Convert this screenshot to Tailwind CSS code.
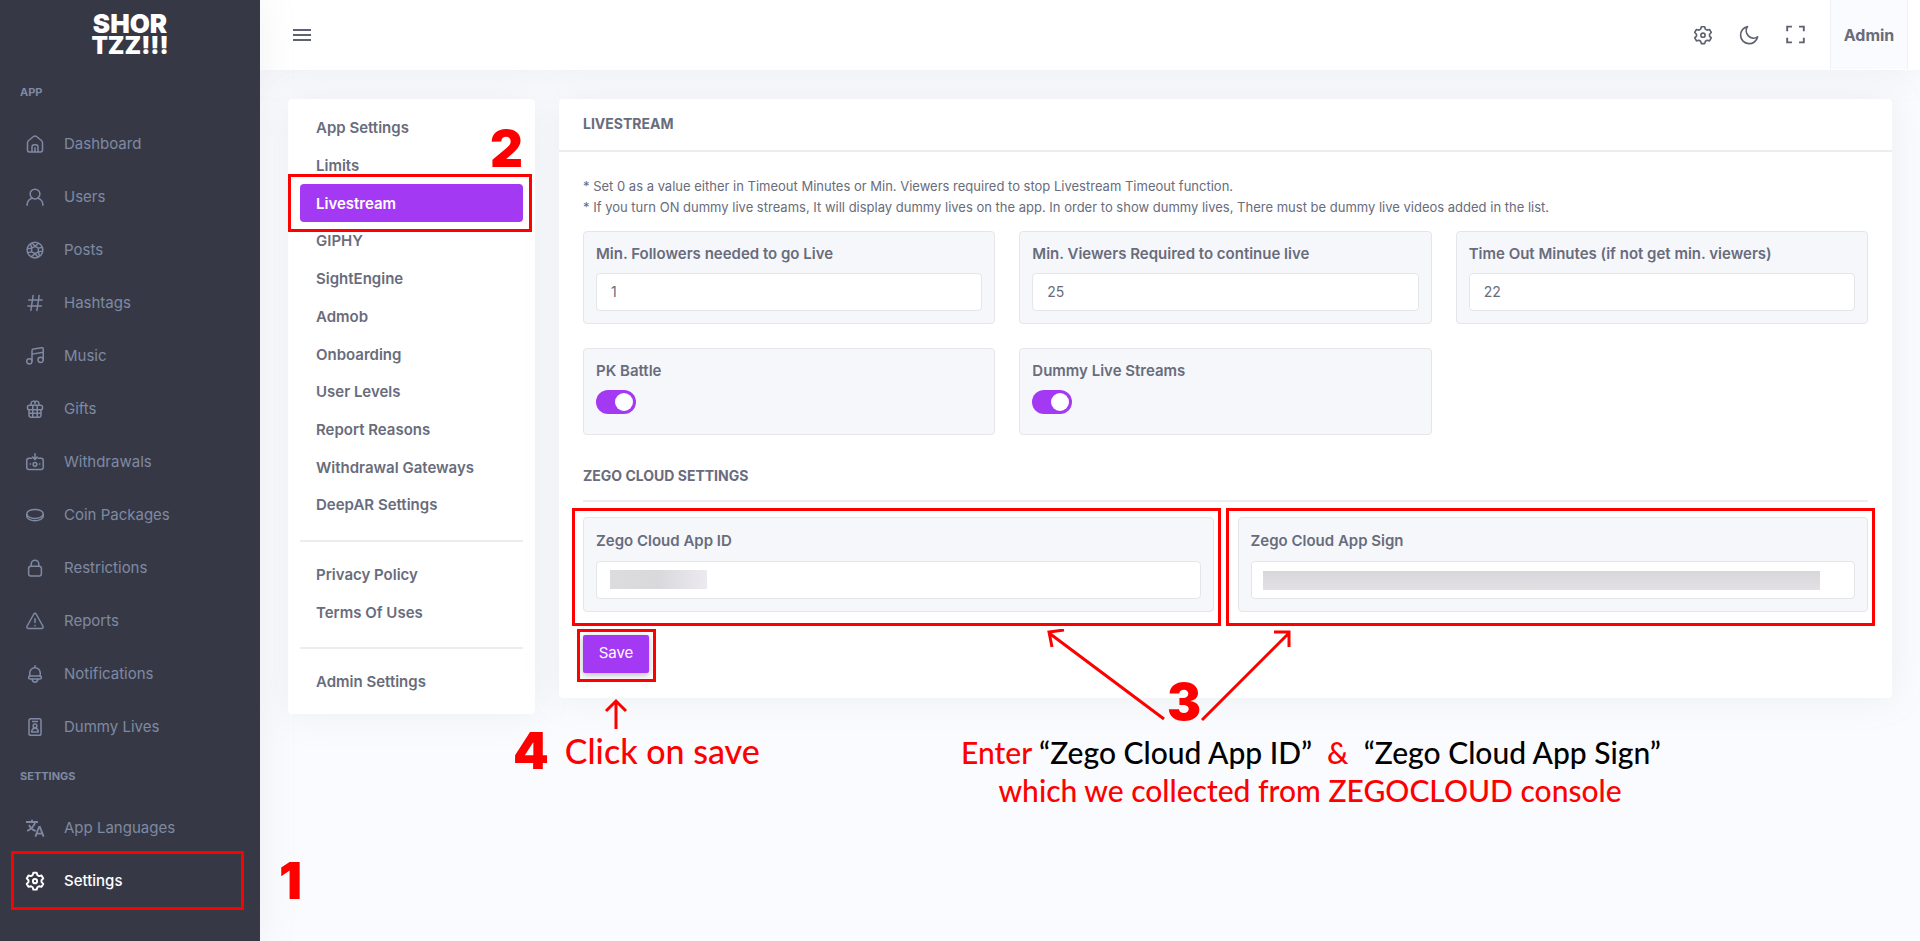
<!DOCTYPE html>
<html lang="en">
<head>
<meta charset="utf-8">
<meta name="viewport" content="width=device-width, initial-scale=1">
<title>Livestream Settings</title>
<script src="https://cdn.jsdelivr.net/npm/@tailwindcss/browser@4"></script>
</head>
<body class="min-h-screen flex bg-[#fafbfe] font-['Inter',sans-serif] text-sm text-[#686c7b]">

<aside class="relative z-10 w-[260px] shrink-0 bg-[#363945] text-[#7f89a3] shadow-[0_0_35px_rgba(154,161,171,0.15)]">
  <a href="#" class="flex h-[69px] flex-col items-center justify-center text-2xl leading-[22px] font-black text-white"><span class="text-[26px] leading-[22px]">SHOR</span><span>TZZ!!!</span></a>
  <h2 class="flex h-12 items-center px-5 text-[11px] font-bold">APP</h2>
  <nav class="text-[15px]">
    <a href="#" class="flex h-[53px] items-center gap-5 pl-[26px]"><svg class="size-[18px]" viewBox="0 0 24 24" fill="none" stroke="currentColor" stroke-width="2" stroke-linecap="round" stroke-linejoin="round"><path d="M2 10.500Q2 8.500 3.500 7.300L10 2Q12 .5 14 2l6.500 5.300Q22 8.500 22 10.500V20q0 2.500-2.500 2.500h-15Q2 22.500 2 20zM8 22v-6q0-3 3-3h2q3 0 3 3v6M12 17v5"/></svg>Dashboard</a>
    <a href="#" class="flex h-[53px] items-center gap-5 pl-[26px]"><svg class="size-[18px]" viewBox="0 0 24 24" fill="none" stroke="currentColor" stroke-width="2" stroke-linecap="round"><circle cx="12" cy="8" r="6.500"/><path d="M1.500 23c0-5 3.500-8.500 7-9.500M22.500 23c0-5-3.500-8.500-7-9.500"/></svg>Users</a>
    <a href="#" class="flex h-[53px] items-center gap-5 pl-[26px]"><svg class="size-[18px]" viewBox="0 0 24 24" fill="none" stroke="currentColor" stroke-width="2"><circle cx="12" cy="12" r="10.500"/><path d="M12 7l4.500 2.500v5L12 17l-4.500-2.500v-5zM12 7L8 2.500M12 7l5-4M16.500 9.500l5-1M16.500 14.500l5.500-1M16.500 14.500l1.500 6M12 17l4 4.500M12 17l-5 4M7.500 14.500l-5 1M7.500 9.500L2 10.500M7.500 9.500L6 3.500"/></svg>Posts</a>
    <a href="#" class="flex h-[53px] items-center gap-5 pl-[26px]"><svg class="size-[18px]" viewBox="0 0 24 24" fill="none" stroke="currentColor" stroke-width="2" stroke-linecap="round"><path d="M3.500 8h18M2.500 16h18M9.500 2l-3 20M17.500 2l-3 20"/></svg>Hashtags</a>
    <a href="#" class="flex h-[53px] items-center gap-5 pl-[26px]"><svg class="size-[18px]" viewBox="0 0 24 24" fill="none" stroke="currentColor" stroke-width="2" stroke-linejoin="round"><circle cx="4.500" cy="19" r="3.500"/><circle cx="19.500" cy="17" r="3.500"/><path d="M8 19V5q0-2 2-2.300L21 1q2-.2 2 1.500V17M8 9.500L23 7"/></svg>Music</a>
    <a href="#" class="flex h-[53px] items-center gap-5 pl-[26px]"><svg class="size-[18px]" viewBox="0 0 24 24" fill="none" stroke="currentColor" stroke-width="2" stroke-linejoin="round"><rect x="2" y="7" width="20" height="6" rx="2.500"/><path d="M4 13v7q0 3 3 3h10q3 0 3-3v-7M9 7v16M15 7v16M4 17.500h16M7 7q-1-5 2.500-5.500Q12 1 12 5q0-4 2.500-3.500Q18 2 17 7"/></svg>Gifts</a>
    <a href="#" class="flex h-[53px] items-center gap-5 pl-[26px]"><svg class="size-[18px]" viewBox="0 0 24 24" fill="none" stroke="currentColor" stroke-width="2" stroke-linecap="round" stroke-linejoin="round"><path d="M7.500 7H4Q1 7 1 10v9q0 3 3 3h16q3 0 3-3v-9q0-3-3-3h-3.500M12 1v7M9 5.500l3 3 3-3M5.500 14.500h.5M18 14.500h.5"/><circle cx="12" cy="15" r="2.500"/></svg>Withdrawals</a>
    <a href="#" class="flex h-[53px] items-center gap-5 pl-[26px]"><svg class="size-[18px]" viewBox="0 0 24 24" fill="none" stroke="currentColor" stroke-width="2"><ellipse cx="12" cy="10.500" rx="11" ry="6"/><path d="M1 10.500v3c0 3.500 5 6 11 6s11-2.500 11-6v-3"/></svg>Coin Packages</a>
    <a href="#" class="flex h-[53px] items-center gap-5 pl-[26px]"><svg class="size-[18px]" viewBox="0 0 24 24" fill="none" stroke="currentColor" stroke-width="2"><rect x="3.500" y="9.500" width="17" height="13" rx="3"/><path d="M7 9.500V6.500a5 5 0 0 1 10 0v3"/></svg>Restrictions</a>
    <a href="#" class="flex h-[53px] items-center gap-5 pl-[26px]"><svg class="size-[18px]" viewBox="0 0 24 24" fill="none" stroke="currentColor" stroke-width="2" stroke-linecap="round" stroke-linejoin="round"><path d="M10.300 3q1.700-2.600 3.400 0L22.600 19q1 3-2 3H3.400q-3 0-2-3zM12 9v5M12 18v.2"/></svg>Reports</a>
    <a href="#" class="flex h-[53px] items-center gap-5 pl-[26px]"><svg class="size-[18px]" viewBox="0 0 24 24" fill="none" stroke="currentColor" stroke-width="2" stroke-linecap="round" stroke-linejoin="round"><path d="M12 1v2.500M5 14.500v-4a7 7 0 0 1 14 0v4M6 14.500h12q2.500 0 2.500 2t-2.500 2H6q-2.500 0-2.500-2t2.500-2zM8 19q1 4 4 4t4-4"/></svg>Notifications</a>
    <a href="#" class="flex h-[53px] items-center gap-5 pl-[26px]"><svg class="size-[18px]" viewBox="0 0 24 24" fill="none" stroke="currentColor" stroke-width="2" stroke-linejoin="round"><rect x="4" y="1" width="16" height="22" rx="2.500"/><path d="M8 4.500h8M7.500 18.500q.5-5 4.500-5t4.500 5z"/><circle cx="12" cy="10.500" r="2.500"/></svg>Dummy Lives</a>
  </nav>
  <h2 class="flex h-12 items-center px-5 text-[11px] font-bold">SETTINGS</h2>
  <nav class="text-[15px]">
    <a href="#" class="flex h-[53px] items-center gap-5 pl-[26px]"><svg class="size-[18px] overflow-visible" viewBox="0 0 24 24" fill="none" stroke="currentColor" stroke-width="2.400"><path d="M0 4h16M8 1v3M4 8q3 6 9 8M12.500 4Q10 12 1.500 16M12.500 23.500l5-13h1l5 13M14.500 19.500h7"/></svg>App Languages</a>
    <a href="#" class="relative flex h-[53px] items-center gap-5 pl-[26px] font-medium text-white" aria-current="page"><svg class="size-[18px] overflow-visible" viewBox="0 0 24 24" fill="none" stroke="currentColor" stroke-width="2.600" stroke-linejoin="round"><path d="M9.800 1h4.400l1 3.200 2.200 1.300 3.300-.8 2.300 3.900-2.300 2.400v2.500l2.300 2.400-2.300 3.900-3.300-.8-2.200 1.300-1 3.200H9.800l-1-3.200-2.200-1.300-3.300.8L1 15.900l2.300-2.400V11L1 8.600l2.300-3.900 3.300.8 2.200-1.300z"/><circle cx="12" cy="12.200" r="2.800"/></svg>Settings
      <span class="absolute -inset-y-[3px] left-[11px] right-4 border-3 border-[#ff0000]"></span>
      <b class="absolute left-[279px] top-0 text-[51px] leading-[53px] font-black text-[#ff0000]">1</b>
    </a>
  </nav>
</aside>

<div class="min-w-0 flex-1">
  <header class="flex h-[70px] items-center bg-white pl-[33px] pr-3 pb-px shadow-[0_0_35px_rgba(154,161,171,0.15)]">
    <button type="button" aria-label="Toggle menu"><svg class="h-[14px] w-[18px]" viewBox="0 0 18 14" stroke="#5d6170" stroke-width="2"><path d="M0 2h18M0 7h18M0 12h18"/></svg></button>
    <div class="ml-auto flex items-center gap-7 pr-[25px] text-[#5d6170]">
      <button type="button" aria-label="Settings"><svg class="size-[18px] overflow-visible" viewBox="0 0 24 24" fill="none" stroke="currentColor" stroke-width="2.200" stroke-linejoin="round"><path d="M9.800 1h4.400l1 3.200 2.200 1.300 3.300-.8 2.300 3.900-2.300 2.400v2.500l2.300 2.400-2.300 3.900-3.300-.8-2.200 1.300-1 3.200H9.800l-1-3.200-2.200-1.300-3.300.8L1 15.900l2.300-2.400V11L1 8.600l2.300-3.900 3.300.8 2.200-1.300z"/><circle cx="12" cy="12.200" r="2.800"/></svg></button>
      <button type="button" aria-label="Dark mode"><svg class="size-[18px] overflow-visible" viewBox="0 0 24 24" fill="none" stroke="currentColor" stroke-width="2.200" stroke-linejoin="round"><path d="M10 .8A11.500 11.500 0 1 0 23.500 14.500 9.800 9.800 0 0 1 10 .8z"/></svg></button>
      <button type="button" aria-label="Full screen"><svg class="size-[19px]" viewBox="0 0 24 24" fill="none" stroke="currentColor" stroke-width="2.400"><path d="M1.500 8V2h6M16.500 2h6v6M22.500 16v6h-6M7.500 22h-6v-6"/></svg></button>
    </div>
    <button type="button" class="flex h-full w-[78px] items-center justify-center border-x border-[#f0f1f5] bg-[#fafbfe] text-base font-bold">Admin</button>
  </header>

  <main class="flex items-start gap-6 pl-7 pr-7 pt-[29px]">
    <nav class="w-[247px] shrink-0 rounded bg-white px-3 pt-[10px] pb-[13px] text-[15px] font-semibold shadow-[0_0_35px_rgba(154,161,171,0.15)]">
      <ul class="grid h-[415px] auto-rows-fr">
        <li class="flex items-center px-4"><a href="#">App Settings</a></li>
        <li class="relative flex items-center px-4"><a href="#">Limits</a><b class="absolute right-0 -top-6 text-[51px] leading-[52px] font-black text-[#ff0000]">2</b></li>
        <li class="relative flex items-center rounded bg-[#a439f3] px-4 text-white"><a href="#" aria-current="page">Livestream</a><span class="absolute -inset-y-[10px] -left-3 -right-[9px] border-3 border-[#ff0000]"></span></li>
        <li class="flex items-center px-4"><a href="#">GIPHY</a></li>
        <li class="flex items-center px-4"><a href="#">SightEngine</a></li>
        <li class="flex items-center px-4"><a href="#">Admob</a></li>
        <li class="flex items-center px-4"><a href="#">Onboarding</a></li>
        <li class="flex items-center px-4"><a href="#">User Levels</a></li>
        <li class="flex items-center px-4"><a href="#">Report Reasons</a></li>
        <li class="flex items-center px-4"><a href="#">Withdrawal Gateways</a></li>
        <li class="flex items-center px-4"><a href="#">DeepAR Settings</a></li>
      </ul>
      <hr class="mt-4 mb-[14px] border-t-2 border-[#ededef]">
      <ul class="grid h-[75px] auto-rows-fr">
        <li class="flex items-center px-4"><a href="#">Privacy Policy</a></li>
        <li class="flex items-center px-4"><a href="#">Terms Of Uses</a></li>
      </ul>
      <hr class="mt-4 mb-[14px] border-t-2 border-[#ededef]">
      <a href="#" class="flex h-[38px] items-center px-4">Admin Settings</a>
    </nav>

    <section class="relative min-w-0 flex-1 rounded bg-white shadow-[0_0_35px_rgba(154,161,171,0.15)]">
      <h1 class="flex h-[53px] items-center border-b-2 border-[#ededef] px-6 pb-0.5 text-sm font-bold">LIVESTREAM</h1>
      <form class="px-6 pt-6 pb-[25px]">
        <p class="text-[13px] leading-[21px]">* Set 0 as a value either in Timeout Minutes or Min. Viewers required to stop Livestream Timeout function.<br>* If you turn ON dummy live streams, It will display dummy lives on the app. In order to show dummy lives, There must be dummy live videos added in the list.</p>
        <div class="mt-[13px] grid grid-cols-3 gap-6 text-[15px]">
          <div class="rounded border border-[#e5e6ea] bg-[#f6f7fb] px-3 pt-[11px] pb-3">
            <label for="followers" class="block h-[30px] leading-[22px] font-semibold">Min. Followers needed to go Live</label>
            <input id="followers" value="1" class="block h-[38px] w-full rounded border border-[#e5e6ea] bg-white px-[14px] pb-0.5 text-sm">
          </div>
          <div class="rounded border border-[#e5e6ea] bg-[#f6f7fb] px-3 pt-[11px] pb-3">
            <label for="viewers" class="block h-[30px] leading-[22px] font-semibold">Min. Viewers Required to continue live</label>
            <input id="viewers" value="25" class="block h-[38px] w-full rounded border border-[#e5e6ea] bg-white px-[14px] pb-0.5 text-sm">
          </div>
          <div class="rounded border border-[#e5e6ea] bg-[#f6f7fb] px-3 pt-[11px] pb-3">
            <label for="timeout" class="block h-[30px] leading-[22px] font-semibold">Time Out Minutes (if not get min. viewers)</label>
            <input id="timeout" value="22" class="block h-[38px] w-full rounded border border-[#e5e6ea] bg-white px-[14px] pb-0.5 text-sm">
          </div>
          <div class="h-[87px] rounded border border-[#e5e6ea] bg-[#f6f7fb] px-3 pt-[11px]">
            <label for="pk" class="block h-[30px] leading-[22px] font-semibold">PK Battle</label>
            <input id="pk" type="checkbox" role="switch" checked class="block h-6 w-10 appearance-none rounded-full bg-[#a439f3] before:mt-[3px] before:ml-[3px] before:block before:size-[18px] before:rounded-full before:bg-white checked:before:ml-[19px]">
          </div>
          <div class="h-[87px] rounded border border-[#e5e6ea] bg-[#f6f7fb] px-3 pt-[11px]">
            <label for="dummy" class="block h-[30px] leading-[22px] font-semibold">Dummy Live Streams</label>
            <input id="dummy" type="checkbox" role="switch" checked class="block h-6 w-10 appearance-none rounded-full bg-[#a439f3] before:mt-[3px] before:ml-[3px] before:block before:size-[18px] before:rounded-full before:bg-white checked:before:ml-[19px]">
          </div>
        </div>
        <h2 class="mt-7 flex h-[39px] items-start border-b-2 border-[#ededef] pt-[3px] text-sm font-bold">ZEGO CLOUD SETTINGS</h2>
        <div class="mt-[15px] grid grid-cols-2 gap-6 text-[15px]">
          <div class="relative rounded border border-[#e5e6ea] bg-[#f6f7fb] px-3 pt-3 pb-3">
            <label for="appid" class="block h-[31px] leading-[22px] font-semibold">Zego Cloud App ID</label>
            <input id="appid" class="block h-[38px] w-full rounded border border-[#e5e6ea] bg-white px-[14px] text-sm">
            <span class="absolute left-[26px] top-[52px] h-[19px] w-[97px] bg-linear-to-r from-[#dcdbde] via-[#d9d9dc] to-[#eceaf0]"></span>
            <span class="absolute -top-[10px] -bottom-[15px] -left-3 -right-2 border-3 border-[#ff0000]"></span>
          </div>
          <div class="relative rounded border border-[#e5e6ea] bg-[#f6f7fb] px-3 pt-3 pb-3">
            <label for="appsign" class="block h-[31px] leading-[22px] font-semibold">Zego Cloud App Sign</label>
            <input id="appsign" class="block h-[38px] w-full rounded border border-[#e5e6ea] bg-white px-[14px] text-sm">
            <span class="absolute left-6 right-[47px] top-[53px] h-[19px] bg-linear-to-b from-[#d7d7da] to-[#e3e0e4]"></span>
            <span class="absolute -top-[10px] -bottom-[15px] -left-[13px] -right-2 border-3 border-[#ff0000]"></span>
          </div>
        </div>
        <div class="relative mt-[23px] w-[66px]">
          <button type="submit" class="block h-[38px] w-full rounded-xs bg-[#a439f3] pb-0.5 text-[15px] text-white shadow-[0_2px_6px_rgba(108,117,125,0.5)]">Save</button>
          <span class="absolute -top-[6px] -bottom-[9px] -left-[6px] -right-[7px] border-3 border-[#ff0000]"></span>
          <svg class="absolute left-[21px] top-[63px] h-8 w-6" viewBox="0 0 24 32" fill="none" stroke="#ff0000" stroke-width="3"><path d="M12 31V3M2 13L12 3l10 10"/></svg>
        </div>
      </form>

      <p class="absolute left-[-46px] top-[627px] flex items-center gap-4 whitespace-nowrap font-['Lato',sans-serif] text-[34px] leading-[50px] font-medium text-[#ff0000]"><b class="font-['Inter',sans-serif] text-[51px] font-black">4</b>Click on save</p>
      <div class="absolute left-[402px] top-[530px] w-[698px] text-[#ff0000]">
        <svg class="absolute left-[85px] top-0 h-[96px] w-[248px]" viewBox="0 0 248 96" fill="none" stroke="#ff0000" stroke-width="3"><path d="M118 90L3 4M18 1L3 3l3 15M156 91L243 4M228 3h15v15"/></svg>
        <b class="absolute left-[206px] top-[47px] text-[51px] leading-[52px] font-black">3</b>
        <p class="whitespace-nowrap pt-[104px] text-center font-['Lato',sans-serif] text-[30px] leading-[38px] font-medium">Enter <span class="text-black">“Zego Cloud App ID”</span>&nbsp; &amp; &nbsp;<span class="text-black">“Zego Cloud App Sign”</span><br>which we collected from ZEGOCLOUD console</p>
      </div>
    </section>
  </main>
</div>
</body>
</html>
